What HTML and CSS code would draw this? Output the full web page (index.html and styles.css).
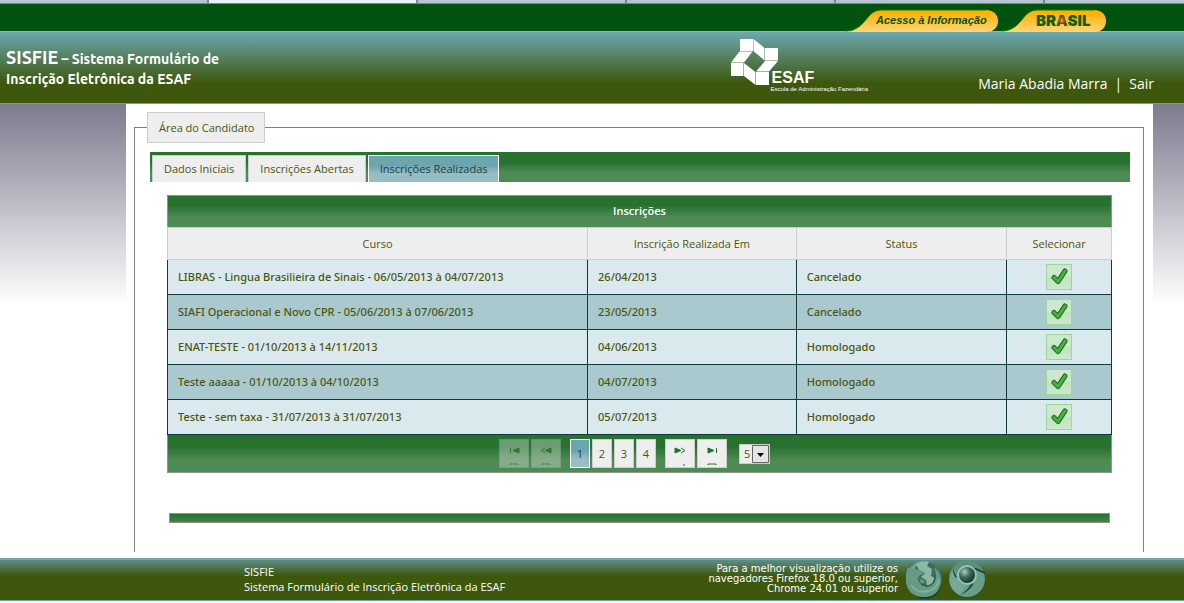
FILE: index.html
```
<!DOCTYPE html>
<html lang="pt-BR">
<head>
<meta charset="utf-8">
<title>SISFIE</title>
<link rel="stylesheet" href="styles.css">
</head>
<body>
<svg class="defs" aria-hidden="true">
  <defs>
    <linearGradient id="gold" x1="0" y1="0" x2="0" y2="1"><stop offset="0" stop-color="#ffac00"/><stop offset=".3" stop-color="#ffb81c"/><stop offset="1" stop-color="#ffd77a"/></linearGradient>
    <radialGradient id="orb" cx=".4" cy=".3" r=".7"><stop offset="0" stop-color="#8fc0ac"/><stop offset=".6" stop-color="#568c78"/><stop offset="1" stop-color="#2c5546"/></radialGradient>
    <radialGradient id="core" cx=".35" cy=".3" r=".7"><stop offset="0" stop-color="#a9cfbf"/><stop offset=".5" stop-color="#3b6b5a"/><stop offset="1" stop-color="#173b30"/></radialGradient>
    <symbol id="check" viewBox="0 0 18 18"><path d="M4 9.500 8 13.500 15 3" fill="none" stroke="#226c1e" stroke-width="5" stroke-linecap="round" stroke-linejoin="round"/><path d="M4 9.500 8 13.500 15 3" fill="none" stroke="#49b142" stroke-width="3" stroke-linecap="round" stroke-linejoin="round"/></symbol>
  </defs>
</svg>
<div class="strip"><i></i><i class="on"></i><i></i><i></i><i></i><i></i></div>
<nav class="govbar">
  <a class="gov info" href="#"><svg viewBox="0 0 152 23" aria-hidden="true"><path d="M0 23C22 20 19 1 36 1H140C148 1 152 6 152 12S148 23 140 23Z" fill="url(#gold)"/><path d="M0 22C22 20 19 1 36 1H140" fill="none" stroke="#0a8200"/></svg><span>Acesso à Informação</span></a>
  <a class="gov brasil" href="#"><svg viewBox="0 0 104 23" aria-hidden="true"><path d="M0 23C22 20 19 1 36 1H92C100 1 104 6 104 12S100 23 92 23Z" fill="url(#gold)"/><path d="M0 22C22 20 19 1 36 1H92" fill="none" stroke="#0a8200"/></svg><span>BR<b>A</b>SIL</span></a>
</nav>
<header class="header">
  <h1><strong>SISFIE</strong> – Sistema Formulário de<br>Inscrição Eletrônica da ESAF</h1>
  <div class="logo">
    <svg viewBox="0 0 48 47" aria-hidden="true"><g fill="#fff"><path d="M9 0H22V12H9Z"/><path d="M22.500 0 33 8.500V21L22.500 12Z"/><path d="M33.500 9H47V21.500H33.500Z"/><path d="M8.500 12.500H21.500L13 23.500H0Z"/><path d="M0 24H12.500V37H0Z"/><path d="M13 24 24.500 33V46L13 37Z"/><path d="M34 22H47L38 32.500H25Z"/><path d="M25 33H38V46H25Z"/></g></svg>
    <div class="logo-text"><b>ESAF</b><small>Escola de Administração Fazendária</small></div>
  </div>
  <div class="user"><span>Maria Abadia Marra</span><i>|</i><a href="#">Sair</a></div>
</header>
<div class="body">
  <main>
    <fieldset>
      <legend>Área do Candidato</legend>
      <div class="tabs" role="tablist">
        <button type="button" role="tab">Dados Iniciais</button>
        <button type="button" role="tab">Inscrições Abertas</button>
        <button type="button" role="tab" class="active" aria-selected="true">Inscrições Realizadas</button>
      </div>
      <section class="panel">
        <table>
          <caption>Inscrições</caption>
          <colgroup><col class="c1"><col class="c2"><col class="c3"><col class="c4"></colgroup>
          <thead><tr><th>Curso</th><th>Inscrição Realizada Em</th><th>Status</th><th>Selecionar</th></tr></thead>
          <tbody>
            <tr><td>LIBRAS - Lingua Brasilieira de Sinais - 06/05/2013 à 04/07/2013</td><td>26/04/2013</td><td>Cancelado</td><td><button type="button" aria-label="Selecionar"><svg><use href="#check"/></svg></button></td></tr>
            <tr><td>SIAFI Operacional e Novo CPR - 05/06/2013 à 07/06/2013</td><td>23/05/2013</td><td>Cancelado</td><td><button type="button" aria-label="Selecionar"><svg><use href="#check"/></svg></button></td></tr>
            <tr><td>ENAT-TESTE - 01/10/2013 à 14/11/2013</td><td>04/06/2013</td><td>Homologado</td><td><button type="button" aria-label="Selecionar"><svg><use href="#check"/></svg></button></td></tr>
            <tr><td>Teste aaaaa - 01/10/2013 à 04/10/2013</td><td>04/07/2013</td><td>Homologado</td><td><button type="button" aria-label="Selecionar"><svg><use href="#check"/></svg></button></td></tr>
            <tr><td>Teste - sem taxa - 31/07/2013 à 31/07/2013</td><td>05/07/2013</td><td>Homologado</td><td><button type="button" aria-label="Selecionar"><svg><use href="#check"/></svg></button></td></tr>
          </tbody>
        </table>
        <div class="pager">
          <div class="group">
            <button type="button" class="nav" disabled aria-label="Primeira"><svg viewBox="0 0 28 27"><path d="M10.500 8V13M19 8V13L13 10.500Z"/><path class="line" d="M10 25V24H18V25"/></svg></button>
            <button type="button" class="nav" disabled aria-label="Anterior"><svg viewBox="0 0 28 27"><path class="line" d="M13 8 9 10.500 13 13"/><path d="M19 8V13L13 10.500Z"/><path class="line" d="M10 25V24H18V25"/></svg></button>
          </div>
          <div class="group">
            <button type="button" class="current">1</button><button type="button">2</button><button type="button">3</button><button type="button">4</button>
          </div>
          <div class="group">
            <button type="button" class="nav" aria-label="Próxima"><svg viewBox="0 0 28 27"><path d="M9 8V13L15 10.500Z"/><path class="line" d="M15 8 19 10.500 15 13M18 24V26"/></svg></button>
            <button type="button" class="nav" aria-label="Última"><svg viewBox="0 0 28 27"><path d="M10 8V13L16 10.500Z"/><path class="line" d="M18.500 8V13M10 25V24H18V25"/></svg></button>
          </div>
          <div class="rows"><select aria-label="Linhas por página"><option>5</option></select><svg viewBox="0 0 17 18" aria-hidden="true"><path d="M.5.500H16.500V17.500H.5Z" fill="#e4e4e4" stroke="#666"/><path d="M5 8H12L8.500 12Z" fill="#000"/></svg></div>
        </div>
      </section>
      <div class="bar"></div>
    </fieldset>
  </main>
</div>
<footer>
  <div class="about">SISFIE<br>Sistema Formulário de Inscrição Eletrônica da ESAF</div>
  <div class="browsers">
    <p>Para a melhor visualização utilize os<br>navegadores Firefox 18.0 ou superior,<br>Chrome 24.01 ou superior</p>
    <svg viewBox="0 0 38 40" role="img" aria-label="Firefox"><ellipse cx="20" cy="22" rx="17" ry="17" fill="#243f1e"/><circle cx="19" cy="19" r="18" fill="url(#orb)"/><circle cx="21" cy="15" r="13" fill="#3c6d5c"/><path d="M11 4Q17 0 24 2L22 6 27 9 26 16 30 18 27 24 22 26 21 20 16 17 20 13 14 10Z" fill="#8ab9a5"/><path d="M3 7 6 10Q10 8 14 10L19 13 14 16 13 19 19 20Q21 23 15 24 23 30 29 23 33 17 29 7 37 13 36 23 33 37 19 37 4 37 1 23 0 13 3 7Z" fill="#659a85"/><path d="M6 25Q12 34 24 31 32 29 34 19" fill="none" stroke="#82b09c" stroke-width="2"/><path d="M13 19Q16 26 23 26 30 24 30 15" fill="none" stroke="#28503f"/></svg>
    <svg viewBox="0 0 38 40" role="img" aria-label="Chrome"><ellipse cx="19" cy="21" rx="18" ry="17" fill="#2b4b2b"/><circle cx="19" cy="19" r="18" fill="#689e89"/><path d="M5 8Q17-5 31 6L36 12Q25 8 17 8 11 9 9 15Z" fill="#5b8f7b"/><path d="M5 8 9 16Q10 25 18 25L12 35Q-3 27 5 8Z" fill="#75aa95"/><path d="M20 6Q30 8 37 12V14L28 10ZM5 8Q6 13 9 17L8 18Q4 13 5 8ZM26 23Q22 31 12 35 20 30 22 25Z" fill="#1e4438"/><circle cx="19" cy="15" r="10" fill="#9ac5b3"/><circle cx="19" cy="15" r="8" fill="url(#core)"/></svg>
  </div>
</footer>
</body>
</html>
```
FILE: styles.css
```
* { box-sizing: border-box; }
body {
  margin: 0;
  background: #fff;
  color: #4a5510;
  font: 11px/16px "Trebuchet MS", "Open Sans", sans-serif;
}
button, select { font: inherit; color: inherit; margin: 0; padding: 0; }
.defs { position: absolute; width: 0; height: 0; }

.strip { display: flex; height: 4px; overflow: hidden; background: #b8c4d2; border-bottom: 1px solid #788896; }
.strip i { flex: 0 0 209px; border-right: 2px solid #7b858f; }
.strip .on { background: #e8f3fc; }

.govbar {
  display: flex;
  justify-content: flex-end;
  align-items: flex-end;
  height: 28px;
  padding-right: 78px;
  background: #00520f;
  border-bottom: 1px solid #d9b800;
}
.gov { position: relative; height: 23px; margin-bottom: -1px; color: #00520f; text-decoration: none; font: italic bold 11px/23px "Liberation Sans", Arial, sans-serif; }
.gov svg { position: absolute; inset: 0; width: 100%; height: 100%; }
.gov span { position: relative; display: block; }
.info { width: 152px; padding-left: 30px; margin-right: 4px; }
.brasil { width: 104px; padding-left: 34px; font: 900 15px/23px Inter, sans-serif; color: #126011; }
.brasil b { font-weight: 900; color: transparent; background: radial-gradient(circle at 50% 48%, #c8521c 2px, #3d5f12 4px); background-clip: text; }

.header {
  position: relative;
  display: flex;
  justify-content: space-between;
  height: 72px;
  padding: 0 30px 0 6px;
  color: #fff;
  background: linear-gradient(#6ca8b0, #3d570d 72%);
  border-bottom: 1px solid #6ca5a5;
}
h1 { margin: 15px 0 0; font: bold 14px/20px Ubuntu, "Noto Sans", sans-serif; }
h1 strong { font-size: 18px; font-weight: 600; }
.logo { display: flex; margin: 7px 0 0 auto; }
.logo svg { width: 48px; height: 47px; }
.logo-text { display: flex; flex-direction: column; margin: 31px 0 0 -8px; font-family: "Liberation Sans", Arial, sans-serif; }
.logo-text b { font-size: 16px; line-height: 15px; padding-left: 1px; }
.logo-text small { font-size: 6px; line-height: 8px; white-space: nowrap; }
.user { display: flex; justify-content: flex-end; gap: 7px; width: 286px; margin-top: 42px; font-size: 14px; line-height: 20px; }
.user i { font-style: normal; }
.user a { color: #fff; text-decoration: none; }

.body { padding: 0 31px 0 126px; background: linear-gradient(#7b7b8e, #fff 200px) no-repeat; }
main { padding: 8px 9px 6px 8px; background: #fff; }
fieldset { min-width: 0; margin: 0; padding: 9px 13px 29px 15px; border: 1px solid #808080; border-bottom: 0; }
legend { margin-left: -3px; padding: 7px 10px 6px 11px; border: 1px solid #ccc; background: #eee; line-height: 16px; }

.tabs {
  display: flex;
  gap: 2px;
  height: 30px;
  padding: 3px 2px 0;
  background: linear-gradient(#27722f 35%, #4f8b55 70%);
}
.tabs button { height: 27px; padding: 0 11px; background: #eee; border: 1px solid #ccc; border-bottom: 0; }
.tabs .active { height: 28px; color: #17424a; background: linear-gradient(#6ca5ae 35%, #98bec4 70%); border: 1px solid #fff; }

.panel { margin: 13px 18px 0 17px; }
table { width: 100%; border-collapse: collapse; table-layout: fixed; }
caption, .pager { background: linear-gradient(#27722f 30%, #4f8b55 70%); border: 1px solid #909590; }
caption { height: 32px; line-height: 30px; color: #fff; font-weight: 600; border-bottom: 0; }
.c1 { width: 44.5%; }
.c2 { width: 22.1%; }
.c3 { width: 22.3%; }
.c4 { width: 11.1%; }
th { height: 32px; padding: 0; background: #eee; border: 1px solid #ccc; font-weight: normal; }
td { height: 35px; padding: 0 10px; border: 1px solid #10393e; background: #dae9ed; font-family: "Trebuchet MS", "Noto Sans", sans-serif; font-weight: 500; }
tr:nth-child(even) td { background: #aac9cf; }
td:last-child { text-align: center; }
td button { display: flex; align-items: center; justify-content: center; width: 26px; height: 26px; margin: 0 auto; background: linear-gradient(#cde8cd 50%, #c0e3c0 50%, #cbe8cb); border: 1px solid #9bd69b; }
td svg { width: 18px; height: 18px; }

.pager { display: flex; justify-content: center; align-items: center; gap: 9px; height: 38px; padding-right: 10px; border-top: 0; }
.group { display: flex; gap: 2px; }
.pager button { width: 20px; height: 29px; background: #eee; border: 1px solid #ccc; }
.pager .nav { width: 30px; }
.nav:disabled { opacity: .35; }
.pager .current { color: #17424a; background: linear-gradient(#6ca5ae 40%, #98bec4 70%); border-color: #fff; }
.nav svg { display: block; width: 28px; height: 27px; fill: #27722f; stroke: #27722f; }
.nav .line { fill: none; }
.rows { position: relative; margin-left: 3px; height: 20px; }
.rows select { appearance: none; display: block; width: 31px; height: 20px; padding-left: 4px; background: #eee; border: 1px solid #ccc; border-radius: 0; }
.rows svg { position: absolute; top: 1px; right: 1px; width: 17px; height: 18px; pointer-events: none; }

.bar { height: 10px; margin: 40px 20px 0 19px; background: linear-gradient(#27722f, #43834a); border: 1px solid #909590; }

footer {
  display: flex;
  justify-content: space-between;
  height: 43px;
  padding: 0 198px 0 244px;
  color: #fff;
  background: linear-gradient(#5f8d82, #3d570d 40%);
  border-top: 2px solid #6ca8b0;
  border-bottom: 1px solid #6ca5a5;
}
.about { padding-top: 4px; font: 11px/15px "Open Sans", sans-serif; }
.browsers { display: flex; gap: 5px; }
.browsers p { margin: 4px 2px 0 0; text-align: right; font: 10px/10px Verdana, "DejaVu Sans", sans-serif; }
.browsers svg { width: 38px; height: 40px; }
```
